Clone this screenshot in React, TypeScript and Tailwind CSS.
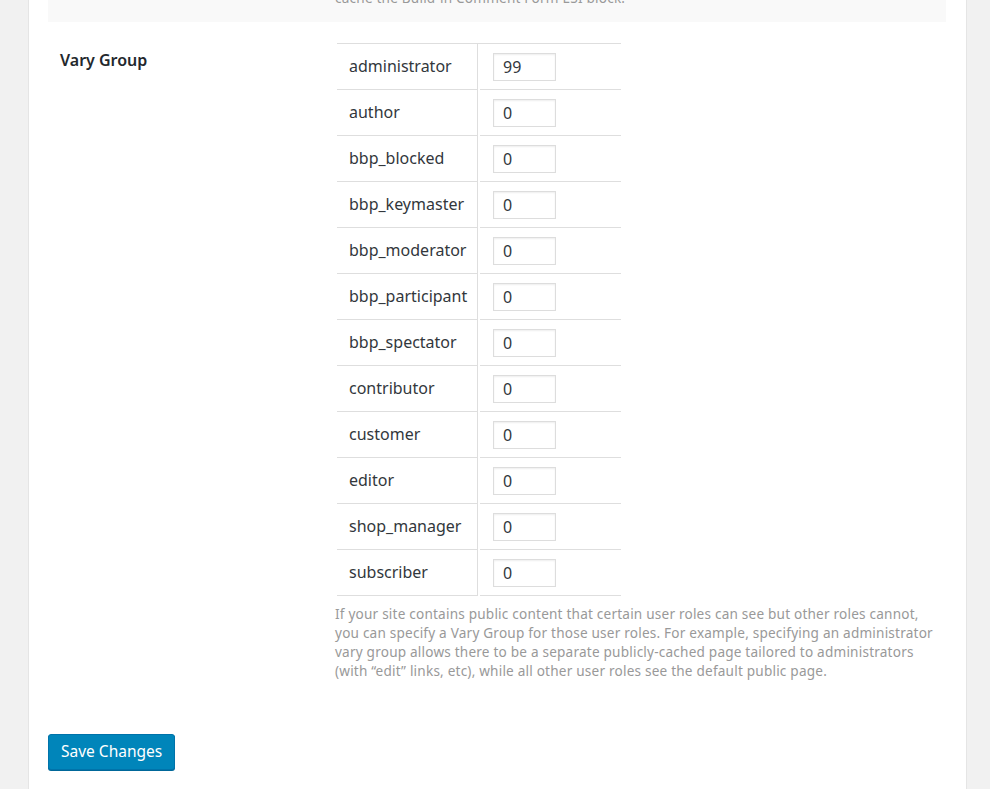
import React from 'react';

const roles: { name: string; value: string }[] = [
  { name: 'administrator', value: '99' },
  { name: 'author', value: '0' },
  { name: 'bbp_blocked', value: '0' },
  { name: 'bbp_keymaster', value: '0' },
  { name: 'bbp_moderator', value: '0' },
  { name: 'bbp_participant', value: '0' },
  { name: 'bbp_spectator', value: '0' },
  { name: 'contributor', value: '0' },
  { name: 'customer', value: '0' },
  { name: 'editor', value: '0' },
  { name: 'shop_manager', value: '0' },
  { name: 'subscriber', value: '0' },
];

const App: React.FC = () => {
  return (
    <div
      className="min-h-[789px] bg-[#f1f1f1] overflow-hidden"
      style={{ fontFamily: '"Noto Sans", "Open Sans", sans-serif' }}
    >
      <div className="ml-[28px] w-[939px] min-h-[789px] bg-white border-x border-[#e5e5e5] pl-[19px]">
        {/* previous setting block, cut off at the top */}
        <div className="w-[898px] h-[22px] bg-[#f9f9f9] overflow-hidden">
          <p className="ml-[287px] -mt-[12px] text-[13.6px] tracking-[0.2px] leading-[19px] text-[#999]">
            cache the Build-in Comment Form ESI block.
          </p>
        </div>

        {/* Vary Group */}
        <div className="flex pt-[21px]">
          <div className="w-[289px] pl-[12px] pt-[5px] text-[16px] font-semibold text-[#23282d]">
            Vary Group
          </div>
          <div>
            <div className="border-t border-[#dedede] w-[284px]" />
            {roles.map((role) => (
              <div key={role.name} className="flex h-[46px]">
                <div className="w-[141px] flex items-center pl-[12px] pb-[2px] border-r border-b border-[#dedede] text-[16px] text-[#32373c]">
                  {role.name}
                </div>
                <div className="w-[2px]" />
                <div className="w-[141px] flex items-center pl-[13px] border-b border-[#dedede]">
                  <input
                    readOnly
                    value={role.value}
                    className="w-[63px] h-[28px] border border-[#ddd] shadow-[inset_0_1px_2px_rgba(0,0,0,0.07)] px-[9px] text-[16px] text-[#32373c] outline-none"
                    style={{ fontFamily: '"Noto Sans", "Open Sans", sans-serif' }}
                  />
                </div>
              </div>
            ))}
            <p className="w-[620px] -ml-[2px] mt-[8px] text-[13.6px] tracking-[0.2px] leading-[19px] text-[#999] whitespace-nowrap">
              If your site contains public content that certain user roles can see but other roles cannot,
              <br />
              you can specify a Vary Group for those user roles. For example, specifying an administrator
              <br />
              vary group allows there to be a separate publicly-cached page tailored to administrators
              <br />
              (with “edit” links, etc), while all other user roles see the default public page.
            </p>
          </div>
        </div>

        <div className="pt-[54px]">
          <button className="h-[36px] px-[12px] bg-[#0085ba] border border-[#0073aa] rounded-[3px] shadow-[0_1px_0_#006799] text-white text-[15.5px]">
            Save Changes
          </button>
        </div>
      </div>
    </div>
  );
};

export default App;
